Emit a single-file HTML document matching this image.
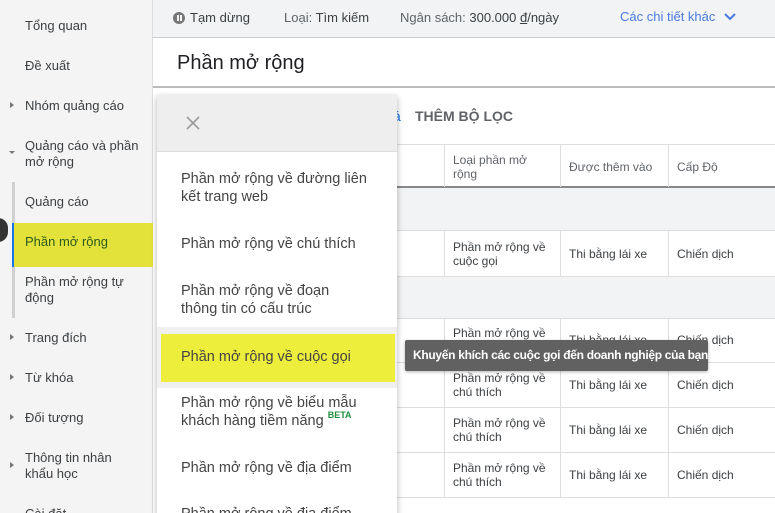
<!DOCTYPE html>
<html><head><meta charset="utf-8"><style>
*{margin:0;padding:0;box-sizing:border-box}
html,body{width:775px;height:513px;overflow:hidden}
body{position:relative;font-family:"Liberation Sans",sans-serif;background:#fff;color:#3c4043}
.a{position:absolute}
.side{left:0;top:0;width:153px;height:513px;background:#f4f4f4;border-right:1px solid #ddd}
.si{position:absolute;left:25px;font-size:13px;color:#3c4043;line-height:16px}
.tri{position:absolute;left:10px;width:0;height:0;border-top:3px solid transparent;border-bottom:3px solid transparent;border-left:4px solid #777}
.td{position:absolute;font-size:12px;color:#3c4043;line-height:14px}
.mi{position:absolute;left:181px;font-size:14.5px;color:#444;line-height:18px}
.hl{position:absolute;left:157px;width:619px;height:1px;background:#ddd}
.vl{position:absolute;width:1px;background:#ddd}
</style></head><body>
<div class="a side"></div>
<div class="a" style="left:12px;top:182px;width:3px;height:136px;background:#d0d0d0"></div>
<div class="a" style="left:12px;top:223px;width:141px;height:44px;background:#e2e23a"></div>
<div class="a" style="left:12px;top:223px;width:2px;height:44px;background:#1a73e8"></div>
<div class="a" style="left:-12px;top:218px;width:20px;height:24px;border-radius:12px;background:#333"></div>
<div class="si" style="top:18px">Tổng quan</div>
<div class="si" style="top:58px">Đề xuất</div>
<div class="tri" style="top:102px"></div><div class="si" style="top:98px">Nhóm quảng cáo</div>
<div class="a" style="left:9px;top:151px;border-left:3px solid transparent;border-right:3px solid transparent;border-top:3px solid #777"></div>
<div class="si" style="top:138px">Quảng cáo và phần<br>mở rộng</div>
<div class="si" style="top:194px">Quảng cáo</div>
<div class="si" style="top:234px;color:#2d5a1e">Phần mở rộng</div>
<div class="si" style="top:274px">Phần mở rộng tự<br>động</div>
<div class="tri" style="top:334px"></div><div class="si" style="top:330px">Trang đích</div>
<div class="tri" style="top:374px"></div><div class="si" style="top:370px">Từ khóa</div>
<div class="tri" style="top:414px"></div><div class="si" style="top:410px">Đối tượng</div>
<div class="tri" style="top:462px"></div><div class="si" style="top:450px">Thông tin nhân<br>khẩu học</div>
<div class="si" style="top:506px">Cài đặt</div>

<div class="a" style="left:153px;top:0;width:622px;height:38px;background:#f1f3f4;border-bottom:1px solid #ccc"></div>
<div class="a" style="left:173px;top:12px;width:12px;height:12px;border-radius:6px;background:#777"></div>
<div class="a" style="left:177px;top:15px;width:1.5px;height:6px;background:#f1f3f4"></div>
<div class="a" style="left:180px;top:15px;width:1.5px;height:6px;background:#f1f3f4"></div>
<div class="a" style="left:190px;top:10px;font-size:13px;color:#3c4043">Tạm dừng</div>
<div class="a" style="left:284px;top:10px;font-size:13px;color:#5f6368">Loại: <span style="color:#3c4043">Tìm kiếm</span></div>
<div class="a" style="left:400px;top:10px;font-size:13px;color:#5f6368">Ngân sách: <span style="color:#3c4043">300.000 <u>đ</u>/ngày</span></div>
<div class="a" style="left:620px;top:9px;font-size:13px;color:#4a7be0">Các chi tiết khác</div>
<svg class="a" style="left:723px;top:12px" width="14" height="10"><path d="M2 2l5 5 5-5" stroke="#4a7be0" stroke-width="2" fill="none"/></svg>

<div class="a" style="left:177px;top:52px;font-size:20px;color:#202124">Phần mở rộng</div>
<div class="a" style="left:153px;top:86px;width:622px;height:2px;background:#bbb"></div>
<div class="a" style="left:415px;top:108px;font-size:14px;font-weight:bold;color:#5f6368">THÊM BỘ LỌC</div>
<div class="a" style="left:393px;top:108px;font-size:14px;color:#1a73e8">á</div>

<div class="hl" style="top:144px"></div>
<div class="a" style="left:157px;top:186px;width:619px;height:2px;background:#888"></div>
<div class="a" style="left:157px;top:188px;width:619px;height:42px;background:#f1f3f4"></div>
<div class="hl" style="top:230px"></div>
<div class="a" style="left:157px;top:276px;width:619px;height:42px;background:#f1f3f4;border-top:1px solid #ddd"></div>
<div class="hl" style="top:318px"></div><div class="hl" style="top:362px"></div><div class="hl" style="top:407px"></div><div class="hl" style="top:452px"></div><div class="hl" style="top:497px"></div>
<div class="vl" style="left:444px;top:144px;height:43px"></div><div class="vl" style="left:560px;top:144px;height:43px"></div><div class="vl" style="left:668px;top:144px;height:43px"></div>
<div class="vl" style="left:444px;top:230px;height:46px"></div><div class="vl" style="left:560px;top:230px;height:46px"></div><div class="vl" style="left:668px;top:230px;height:46px"></div>
<div class="vl" style="left:444px;top:318px;height:180px"></div><div class="vl" style="left:560px;top:318px;height:180px"></div><div class="vl" style="left:668px;top:318px;height:180px"></div>
<div class="td" style="left:453px;top:153px;color:#5f6368">Loại phần mở<br>rộng</div>
<div class="td" style="left:569px;top:160px;color:#5f6368">Được thêm vào</div>
<div class="td" style="left:677px;top:160px;color:#5f6368">Cấp Độ</div>
<div class="td" style="left:453px;top:240px">Phần mở rộng về<br>cuộc gọi</div><div class="td" style="left:569px;top:247px">Thi bằng lái xe</div><div class="td" style="left:677px;top:247px">Chiến dịch</div>
<div class="td" style="left:453px;top:326px">Phần mở rộng về</div><div class="td" style="left:569px;top:333px">Thi bằng lái xe</div><div class="td" style="left:677px;top:333px">Chiến dịch</div>
<div class="td" style="left:453px;top:371px">Phần mở rộng về<br>chú thích</div><div class="td" style="left:569px;top:378px">Thi bằng lái xe</div><div class="td" style="left:677px;top:378px">Chiến dịch</div>
<div class="td" style="left:453px;top:416px">Phần mở rộng về<br>chú thích</div><div class="td" style="left:569px;top:423px">Thi bằng lái xe</div><div class="td" style="left:677px;top:423px">Chiến dịch</div>
<div class="td" style="left:453px;top:461px">Phần mở rộng về<br>chú thích</div><div class="td" style="left:569px;top:468px">Thi bằng lái xe</div><div class="td" style="left:677px;top:468px">Chiến dịch</div>

<div class="a" style="left:157px;top:95px;width:240px;height:430px;background:#fff;box-shadow:0 2px 6px rgba(0,0,0,.3)"></div>
<div class="a" style="left:157px;top:95px;width:240px;height:57px;background:#eeeeee;border-bottom:1px solid #ddd"></div>
<svg class="a" style="left:185px;top:115px" width="16" height="16"><path d="M2 2l12 12M14 2L2 14" stroke="#999" stroke-width="1.6"/></svg>
<div class="a" style="left:157px;top:327px;width:240px;height:61px;background:#f0f0f0"></div>
<div class="a" style="left:161px;top:334px;width:234px;height:48px;background:#eded3c"></div>
<div class="mi" style="top:170px">Phần mở rộng về đường liên<br>kết trang web</div>
<div class="mi" style="top:235px">Phần mở rộng về chú thích</div>
<div class="mi" style="top:282px">Phần mở rộng về đoạn<br>thông tin có cấu trúc</div>
<div class="mi" style="top:348px">Phần mở rộng về cuộc gọi</div>
<div class="mi" style="top:394px">Phần mở rộng về biểu mẫu<br>khách hàng tiềm năng <span style="position:relative;top:-7px;font-size:9px;font-weight:bold;color:#1e8e3e">BETA</span></div>
<div class="mi" style="top:459px">Phần mở rộng về địa điểm</div>
<div class="mi" style="top:505px">Phần mở rộng về địa điểm</div>

<div class="a" style="left:405px;top:340px;width:303px;height:31px;background:#616161;border-radius:2px;box-shadow:0 1px 3px rgba(0,0,0,.3);color:#fff;font-size:12px;font-weight:bold;line-height:31px;padding-left:8px;white-space:nowrap;letter-spacing:-0.3px;overflow:hidden">Khuyến khích các cuộc gọi đến doanh nghiệp của bạn</div>
</body></html>
